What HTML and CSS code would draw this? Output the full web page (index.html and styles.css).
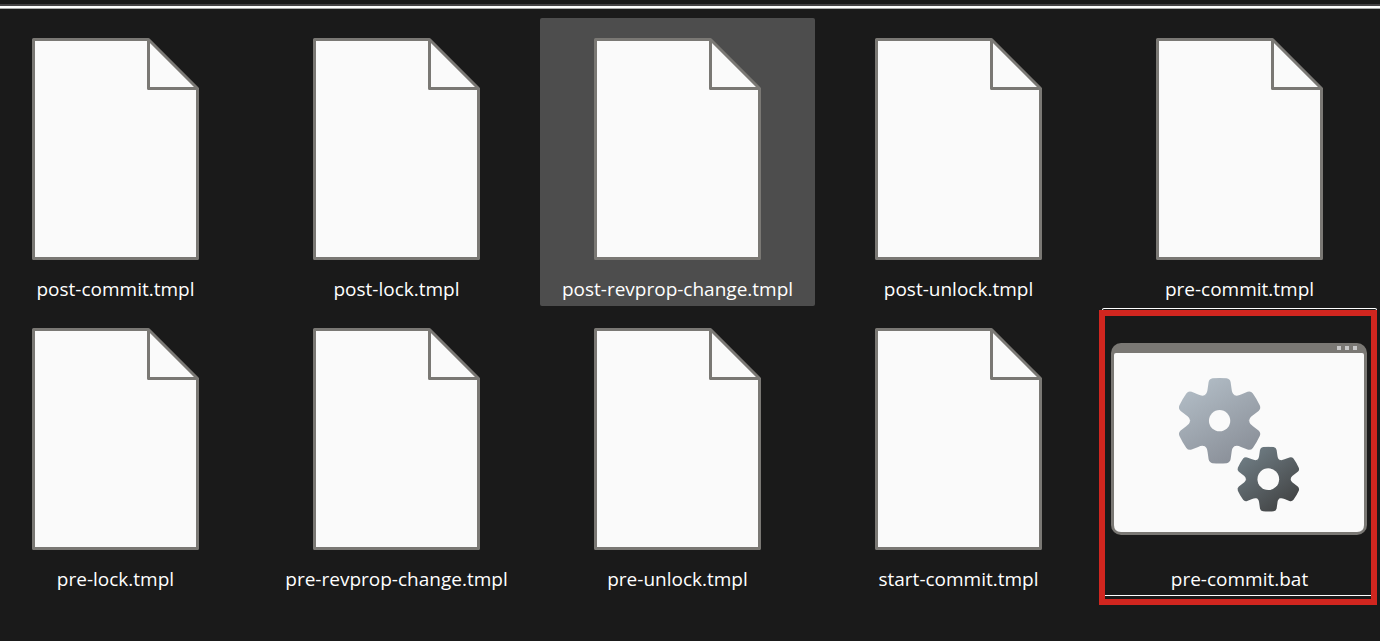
FILE: index.html
```html
<!DOCTYPE html>
<html lang="en">
<head>
<meta charset="utf-8">
<title>hooks</title>
<link rel="stylesheet" href="styles.css">
</head>
<body>
<svg class="defs" aria-hidden="true">
  <defs>
    <symbol id="page" viewBox="0 0 167 222">
      <path d="M1.5 1.5H116.500L165.500 50.500V220.500H1.500Z" fill="#fafafa" stroke="#7a7874" stroke-width="3" stroke-linejoin="round"/>
      <path d="M116.500 1.500V50.500H165.500" fill="none" stroke="#7a7874" stroke-width="3" stroke-linejoin="round"/>
    </symbol>
    <path id="tooth" d="M0 0L-44.500 -77C-38 -81 -37 -88 -36 -95L-33 -116Q-31 -126 -21 -127.500Q0 -129.500 21 -127.500Q31 -126 33 -116L36 -95C37 -88 38 -81 44.500 -77Z"/>
    <mask id="gear" maskUnits="userSpaceOnUse" x="-135" y="-135" width="270" height="270">
      <g fill="#fff">
        <circle r="87"/>
        <use href="#tooth"/>
        <use href="#tooth" transform="rotate(60)"/>
        <use href="#tooth" transform="rotate(120)"/>
        <use href="#tooth" transform="rotate(180)"/>
        <use href="#tooth" transform="rotate(240)"/>
        <use href="#tooth" transform="rotate(300)"/>
      </g>
    </mask>
    <linearGradient id="light" x1="0.200" y1="0" x2="0.800" y2="1">
      <stop offset="0" stop-color="#b3bec7"/>
      <stop offset="1" stop-color="#878c95"/>
    </linearGradient>
    <linearGradient id="dark" x1="0.200" y1="0.100" x2="0.800" y2="0.900">
      <stop offset="0" stop-color="#6e7b82"/>
      <stop offset="1" stop-color="#434546"/>
    </linearGradient>
  </defs>
</svg>
<header class="divider"></header>
<main>
  <ul class="files">
    <li><button class="file" type="button"><svg class="page"><use href="#page"/></svg><span class="name">post-commit.tmpl</span></button></li>
    <li><button class="file" type="button"><svg class="page"><use href="#page"/></svg><span class="name">post-lock.tmpl</span></button></li>
    <li><button class="file hovered" type="button"><svg class="page"><use href="#page"/></svg><span class="name">post-revprop-change.tmpl</span></button></li>
    <li><button class="file" type="button"><svg class="page"><use href="#page"/></svg><span class="name">post-unlock.tmpl</span></button></li>
    <li><button class="file" type="button"><svg class="page"><use href="#page"/></svg><span class="name">pre-commit.tmpl</span></button></li>
    <li><button class="file" type="button"><svg class="page"><use href="#page"/></svg><span class="name">pre-lock.tmpl</span></button></li>
    <li><button class="file" type="button"><svg class="page"><use href="#page"/></svg><span class="name">pre-revprop-change.tmpl</span></button></li>
    <li><button class="file" type="button"><svg class="page"><use href="#page"/></svg><span class="name">pre-unlock.tmpl</span></button></li>
    <li><button class="file" type="button"><svg class="page"><use href="#page"/></svg><span class="name">start-commit.tmpl</span></button></li>
    <li><button class="file focused" type="button">
      <svg class="script" viewBox="0 0 257 192">
        <rect width="256" height="192" rx="10" fill="#7a7874"/>
        <path d="M3 12Q3 10 5 10H251Q253 10 253 12V182Q253 189 246 189H10Q3 189 3 182Z" fill="#fafafa"/>
        <path d="M226 3h4v4h-4zM234 3h4v4h-4zM242 3h4v4h-4z" fill="#c8c8c8"/>
        <g transform="translate(108.600 77.700) scale(0.333)">
          <rect x="-130" y="-130" width="260" height="260" fill="url(#light)" mask="url(#gear)"/>
          <circle r="32" fill="#fafafa"/>
        </g>
        <g transform="translate(157.300 136.200) scale(0.252)">
          <rect x="-130" y="-130" width="260" height="260" fill="url(#dark)" mask="url(#gear)"/>
          <circle r="43" fill="#fafafa"/>
        </g>
      </svg>
      <span class="name">pre-commit.bat</span></button></li>
  </ul>
</main>
</body>
</html>
```
FILE: styles.css
```css
body {
  min-height: 100vh;
  margin: 0;
  background: #1a1a1a;
  color: #fff;
  font-family: "Open Sans", "Noto Sans", sans-serif;
}

.defs {
  position: absolute;
  width: 0;
  height: 0;
}

.divider {
  height: 2px;
  margin-bottom: 9px;
  border-top: 4px solid #1a1a1a;
  background: #454345;
  box-shadow: 0 2px #fff, 0 3px #aaa;
}

main {
  padding-top: 3px;
}

.files {
  display: grid;
  grid-template-columns: repeat(5, 1fr);
  gap: 2px 6px;
  margin: 0 3px 0 -22px;
  padding: 0;
  list-style: none;
}

.file {
  position: relative;
  display: flex;
  flex-direction: column;
  align-items: center;
  gap: 17px;
  width: 100%;
  padding: 20px 0 5px;
  border: 0;
  border-radius: 2px;
  background: transparent;
  color: inherit;
  font: inherit;
}

.file.hovered {
  background: #4d4d4d;
}

.file.focused {
  box-shadow: inset 0 0 0 1px #fff;
}

/* Red highlight frame drawn over the focused tile */
.file.focused::after {
  content: "";
  position: absolute;
  inset: 2px 0 -9px -3px;
  border: 6px solid #d1261f;
}

.page {
  width: 167px;
  height: 222px;
}

.script {
  width: 257px;
  height: 192px;
  margin: 15px 0;
}

.name {
  font-size: 19px;
  line-height: 24px;
}
```
